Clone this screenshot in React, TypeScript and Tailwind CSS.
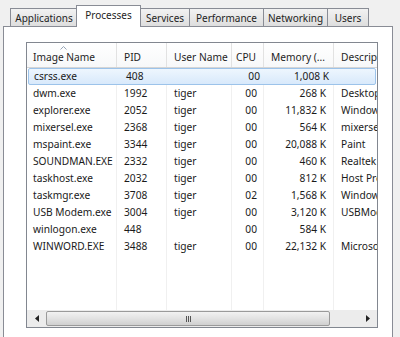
import React from "react";

const rows: string[][] = [
  ["csrss.exe", "408", "", "00", "1,008 K", ""],
  ["dwm.exe", "1992", "tiger", "00", "268 K", "Desktop Window Manager"],
  ["explorer.exe", "2052", "tiger", "00", "11,832 K", "Windows Explorer"],
  ["mixersel.exe", "2368", "tiger", "00", "564 K", "mixersel"],
  ["mspaint.exe", "3344", "tiger", "00", "20,088 K", "Paint"],
  ["SOUNDMAN.EXE", "2332", "tiger", "00", "460 K", "Realtek"],
  ["taskhost.exe", "2032", "tiger", "00", "812 K", "Host Process"],
  ["taskmgr.exe", "3708", "tiger", "02", "1,568 K", "Windows Task Manager"],
  ["USB Modem.exe", "3004", "tiger", "00", "3,120 K", "USBModem"],
  ["winlogon.exe", "448", "", "00", "584 K", ""],
  ["WINWORD.EXE", "3488", "tiger", "00", "22,132 K", "Microsoft Office Word"],
];

const cols = "grid grid-cols-[90px_50px_65px_32px_70px_100px]";

function Tab({ label, w, first }: { label: string; w: string; first?: boolean }) {
  return (
    <div
      className={`${w} ${first ? "" : "-ml-px"} h-[18px] border border-b-0 border-[#898c95] bg-gradient-to-b from-[#f2f2f2] to-[#dedede] flex items-center justify-center pt-px text-[#1e1e1e] whitespace-nowrap`}
    >
      {label}
    </div>
  );
}

export default function App() {
  return (
    <div
      className="w-[400px] h-[337px] overflow-hidden bg-[#f0f0f0] text-[10.2px] leading-none"
      style={{ fontFamily: '"Noto Sans", "Open Sans", sans-serif' }}
    >
      <div className="flex items-end pl-[10px] pt-[5px] h-[26px] text-[10px]">
        <Tab label="Applications" w="w-[68px]" first />
        <div className="relative z-10 ml-[-2px] w-[65px] h-[22px] mb-[-1px] border border-b-0 border-[#898c95] bg-white flex items-start justify-center pt-[4px] text-[#1e1e1e]">
          Processes
        </div>
        <Tab label="Services" w="w-[50px]" />
        <Tab label="Performance" w="w-[75px]" />
        <Tab label="Networking" w="w-[65px]" />
        <Tab label="Users" w="w-[42px]" />
      </div>
      <div className="ml-[3px] w-[390px] h-[330px] border border-[#898c95] bg-white pt-[15px] pl-[22px]">
        <div className="w-[352px] h-[286px] border border-[#828790] flex flex-col overflow-hidden text-[#1a1a1a]">
          {/* header */}
          <div className={`${cols} h-[25px] shrink-0 border-b border-[#d5d5d5] bg-gradient-to-b from-white to-[#f7f8f9] text-[#1e1e1e] whitespace-nowrap`}>
            <div className="relative border-r border-[#e2e2e2] pl-[6px] flex items-center pt-[5px]">
              <svg className="absolute left-[33px] top-[3px]" width="7" height="4" viewBox="0 0 7 4">
                <path d="M0.5 3.5 L3.5 0.5 L6.5 3.5" fill="none" stroke="#97a5b8" strokeWidth="1" />
              </svg>
              Image Name
            </div>
            <div className="border-r border-[#e2e2e2] pl-[7px] flex items-center pt-[5px]">PID</div>
            <div className="border-r border-[#e2e2e2] pl-[7px] flex items-center pt-[5px]">User Name</div>
            <div className="border-r border-[#e2e2e2] pl-[4px] flex items-center pt-[5px]">CPU</div>
            <div className="border-r border-[#e2e2e2] pl-[7px] flex items-center pt-[5px] overflow-hidden">Memory (...</div>
            <div className="pl-[7px] flex items-center pt-[5px]">Description</div>
          </div>
          {/* body */}
          <div className="flex-1 flex flex-col">
            {rows.map((r, i) => {
              const sel = i === 0;
              const line = sel ? "" : "border-r border-[#f0f0f0]";
              return (
                <div
                  key={i}
                  className={`${cols} h-[17px] shrink-0 items-stretch whitespace-nowrap ${
                    sel
                      ? "mx-[1px] rounded-[2px] border border-[#9cc3ea] bg-gradient-to-b from-[#eef6fe] to-[#d8e9fb]"
                      : ""
                  }`}
                >
                  <div className={`${line} pl-[6px] flex items-center ${sel ? "-ml-px" : ""}`}>{r[0]}</div>
                  <div className={`${line} pl-[7px] flex items-center`}>{r[1]}</div>
                  <div className={`${line} pl-[7px] flex items-center`}>{r[2]}</div>
                  <div className={`${line} pr-[6px] flex items-center justify-end`}>{r[3]}</div>
                  <div className={`${line} pr-[7px] flex items-center justify-end`}>{r[4]}</div>
                  <div className="pl-[7px] flex items-center">{r[5]}</div>
                </div>
              );
            })}
            <div className={`${cols} flex-1`}>
              <div className="border-r border-[#f0f0f0]" />
              <div className="border-r border-[#f0f0f0]" />
              <div className="border-r border-[#f0f0f0]" />
              <div className="border-r border-[#f0f0f0]" />
              <div className="border-r border-[#f0f0f0]" />
              <div />
            </div>
          </div>
          {/* horizontal scrollbar */}
          <div className="h-[17px] shrink-0 flex bg-[#ececec]">
            <div className="w-[19px] flex items-center justify-center">
              <svg width="4" height="7" viewBox="0 0 4 7">
                <path d="M4 0 L0 3.5 L4 7 Z" fill="#222" />
              </svg>
            </div>
            <div className="w-[284px] my-px rounded-[2px] border border-[#9a9a9a] bg-gradient-to-b from-[#f2f2f2] via-[#e2e2e2] to-[#d0d0d0] flex items-center justify-center gap-[1px]">
              <div className="w-px h-[6px] bg-[#555]" />
              <div className="w-px h-[6px] bg-[#555]" />
              <div className="w-px h-[6px] bg-[#555]" />
            </div>
            <div className="flex-1 flex items-center justify-end pr-[7px]">
              <svg width="4" height="7" viewBox="0 0 4 7">
                <path d="M0 0 L4 3.5 L0 7 Z" fill="#222" />
              </svg>
            </div>
          </div>
        </div>
      </div>
    </div>
  );
}
